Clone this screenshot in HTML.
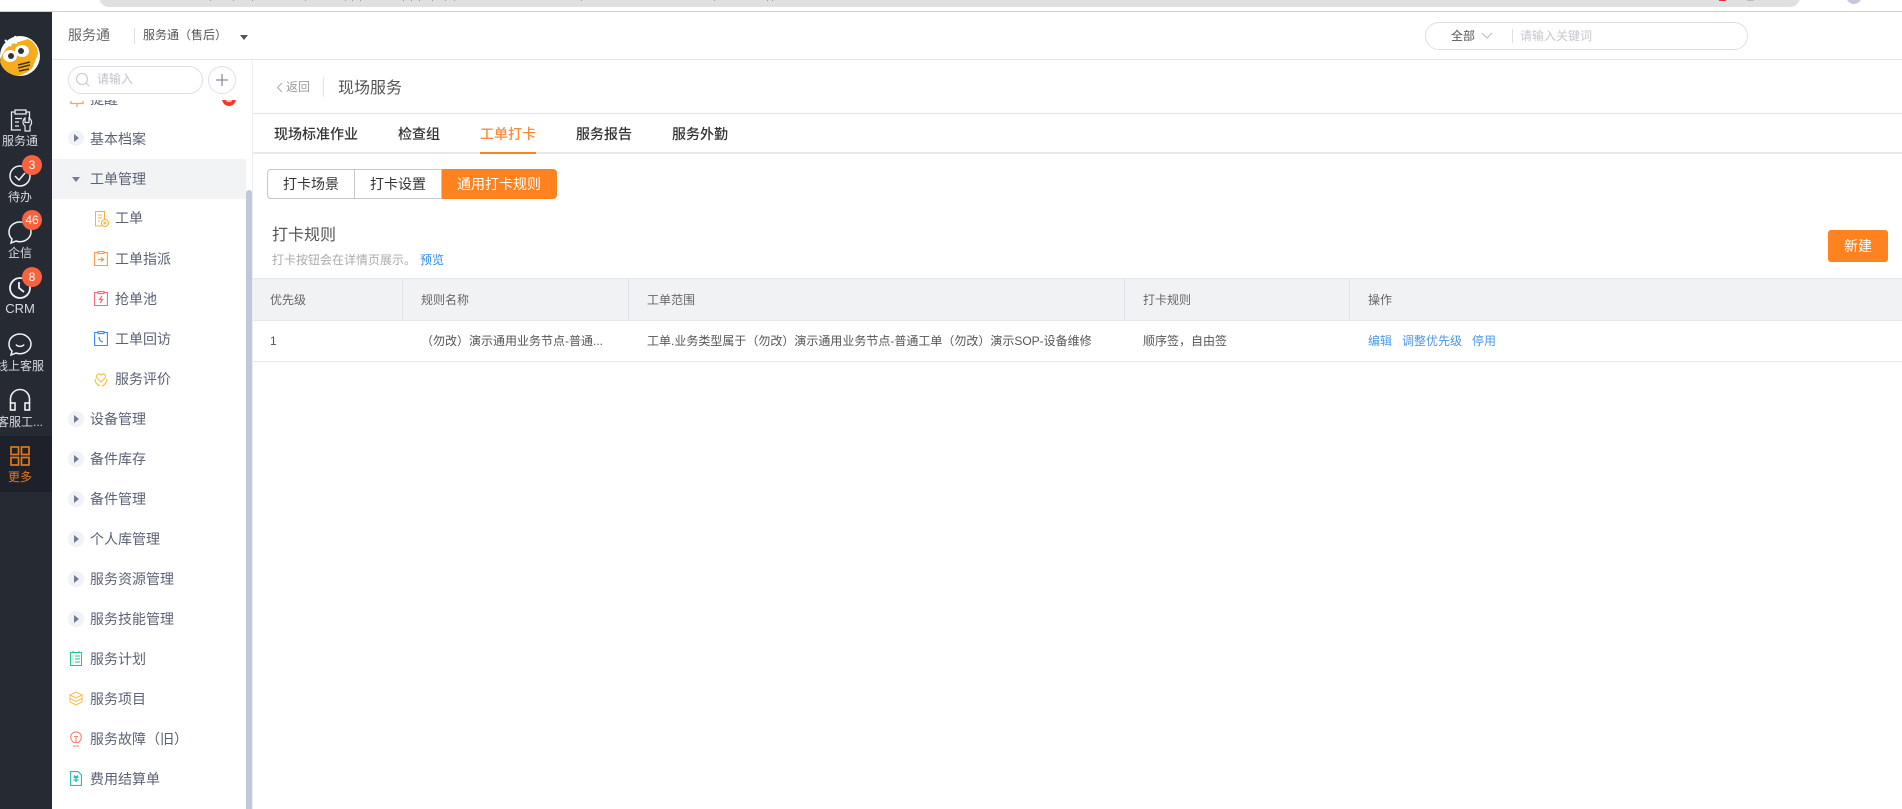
<!DOCTYPE html>
<html lang="zh"><head><meta charset="utf-8"><title>现场服务</title>
<style>
html,body{margin:0;padding:0;width:1902px;height:809px;overflow:hidden;background:#fff}
body{position:relative;font-family:"Liberation Sans","Noto Sans CJK SC",sans-serif;color:#4d5366;filter:blur(.35px)}
.a,.t{position:absolute}
.t{white-space:nowrap;line-height:20px;height:20px}
svg{position:absolute;overflow:visible}
.rail{position:absolute;left:0;top:12px;width:52px;height:797px;background:#252a33}
.rl{position:absolute;left:-16px;width:72px;text-align:center;color:#d8dade;font-size:12px;line-height:16px;white-space:nowrap}
.bd{position:absolute;left:22px;width:20px;height:20px;border-radius:50%;background:#f9623e;color:#fff;font-size:12px;line-height:20px;text-align:center}
.m{font-size:14px;color:#5b6275}
.c{position:absolute;left:68px;width:16px;height:16px;border-radius:50%;background:#f0f2f8}
.c:after{content:"";position:absolute;left:6px;top:3.5px;border-left:5px solid #747c8e;border-top:4.5px solid transparent;border-bottom:4.5px solid transparent}
.tab{font-size:14px;color:#333;top:124px;font-weight:500}
.th{font-size:12px;color:#666;top:290px}
.td{font-size:12px;color:#555;top:331px}
.lk{font-size:12px;color:#4a98e8;top:331px}
.sep{position:absolute;top:279px;width:1px;height:41px;background:#e2e4e9}
.k{position:absolute;top:0;width:1px;height:1px;background:#999}
</style></head><body>

<!-- browser strip -->
<div class="a" style="left:99px;top:-10px;width:1701px;height:17px;background:#e0e0e0;border-radius:0 0 10px 10px"></div>
<div class="k" style="left:210px"></div><div class="k" style="left:233px"></div><div class="k" style="left:252px"></div><div class="k" style="left:305px"></div><div class="k" style="left:345px"></div><div class="k" style="left:352px"></div><div class="k" style="left:360px"></div><div class="k" style="left:403px"></div><div class="k" style="left:411px"></div><div class="k" style="left:419px"></div><div class="k" style="left:432px"></div><div class="k" style="left:445px"></div><div class="k" style="left:454px"></div><div class="k" style="left:581px"></div><div class="k" style="left:714px"></div><div class="k" style="left:767px"></div><div class="k" style="left:772px"></div>
<div class="a" style="left:1846px;top:-12px;width:16px;height:16px;border-radius:50%;background:#c6c9d8"></div>
<div class="a" style="left:1719px;top:0;width:7px;height:1px;background:#e33"></div>
<div class="a" style="left:1747px;top:0;width:7px;height:1px;background:#bbb"></div>
<div class="a" style="left:0;top:11px;width:1902px;height:1px;background:#cfcfcf"></div>

<!-- header -->
<div class="t" style="left:68px;top:25px;font-size:14px;color:#666">服务通</div>
<div class="a" style="left:134px;top:28px;width:1px;height:16px;background:#dcdfe6"></div>
<div class="t" style="left:143px;top:25px;font-size:12px;color:#555">服务通（售后）</div>
<div class="a" style="left:240px;top:35px;border-top:5px solid #555;border-left:4px solid transparent;border-right:4px solid transparent"></div>
<div class="a" style="left:1425px;top:22px;width:321px;height:26px;border:1px solid #dcdfe8;border-radius:14px"></div>
<div class="t" style="left:1451px;top:26px;font-size:12px;color:#555">全部</div>
<svg style="left:1481px;top:32px" width="12" height="8"><path d="M1 1l5 5 5-5" fill="none" stroke="#bbb" stroke-width="1"/></svg>
<div class="a" style="left:1512px;top:29px;width:1px;height:14px;background:#dcdfe6"></div>
<div class="t" style="left:1520px;top:26px;font-size:12px;color:#c4c7cf">请输入关键词</div>
<div class="a" style="left:52px;top:59px;width:1850px;height:1px;background:#e3e4e8"></div>

<!-- rail -->
<div class="rail"></div>
<svg style="left:0;top:36px" width="40" height="40" viewBox="0 0 40 40">
<circle cx="20" cy="20" r="20" fill="#fff"/>
<path d="M0 26 Q2 14 12 8 L28 3 Q38 8 38 18 L34 28 Q32 36 18 40 Q4 38 0 26Z" fill="#f6ad1d"/>
<path d="M5 4l6 6M15 0l1 8" stroke="#fff" stroke-width="2"/>
<ellipse cx="10" cy="20" rx="7" ry="6" fill="#fff"/><ellipse cx="22" cy="15" rx="7" ry="6" fill="#fff"/>
<circle cx="11" cy="20" r="3" fill="#333"/><circle cx="21" cy="15" r="3" fill="#333"/>
<path d="M18 29l12-3M18 32l12-3M19 35l10-2" stroke="#4a3410" stroke-width="1.6"/>
</svg>
<svg style="left:9px;top:109px" width="24" height="24" viewBox="0 0 24 24" fill="none" stroke="#e8e9ec" stroke-width="1.3">
<path d="M6 3H2.500V21H12M17 3h3.500v6"/><rect x="6" y="1" width="11" height="4"/><path d="M6 9.500h7M6 13h4M6 17h4"/>
<path d="M16 9v4.500h4V9a5 5 0 0 1 1 8v5h-5v-5a5 5 0 0 1 0-8z" stroke-width="1.2"/></svg>
<div class="rl" style="top:133px">服务通</div>
<svg style="left:9px;top:165px" width="22" height="22" viewBox="0 0 22 22" fill="none" stroke="#f0f1f3" stroke-width="1.500"><circle cx="11" cy="11" r="10"/><path d="M6 11l4 4 6-7"/></svg>
<div class="bd" style="top:155px">3</div>
<div class="rl" style="top:189px">待办</div>
<svg style="left:8px;top:221px" width="24" height="23" viewBox="0 0 24 23" fill="none" stroke="#f0f1f3" stroke-width="1.500"><path d="M12 1C6 1 1 5 1 11c0 3 1.200 5.500 3 7l-1 4 5-2c1.300.5 2.600.7 4 .7 6 0 11-4.500 11-9.700S18 1 12 1z"/></svg>
<div class="bd" style="top:210px">46</div>
<div class="rl" style="top:245px">企信</div>
<svg style="left:9px;top:277px" width="22" height="22" viewBox="0 0 22 22" fill="none" stroke="#f0f1f3" stroke-width="1.800"><circle cx="11" cy="11" r="10"/><path d="M10 5v6l5 4"/></svg>
<div class="bd" style="top:267px">8</div>
<div class="rl" style="top:301px;font-size:13px">CRM</div>
<svg style="left:8px;top:333px" width="24" height="23" viewBox="0 0 24 23" fill="none" stroke="#f0f1f3" stroke-width="1.500"><path d="M12 1C6 1 1 5 1 11c0 3 1.200 5.500 3 7l-1 4 5-2c1.300.5 2.600.7 4 .7 6 0 11-4.500 11-9.700S18 1 12 1z"/><path d="M8 11.500c1.500 2.500 6.500 2.500 8 0"/></svg>
<div class="rl" style="top:358px">线上客服</div>
<svg style="left:9px;top:389px" width="22" height="22" viewBox="0 0 22 22" fill="none" stroke="#f0f1f3" stroke-width="1.600"><path d="M1.500 14V10a9.500 9.500 0 0 1 19 0v4"/><rect x="1.500" y="14" width="4.500" height="7" fill="#252a33"/><rect x="16" y="14" width="4.500" height="7" fill="#252a33"/></svg>
<div class="rl" style="top:414px">客服工...</div>
<div class="a" style="left:0;top:436px;width:52px;height:56px;background:#1e2129"></div>
<svg style="left:10px;top:446px" width="20" height="20" viewBox="0 0 20 20" fill="none" stroke="#e07a1e" stroke-width="1.700"><rect x="1" y="1" width="7.500" height="7.500"/><rect x="11.500" y="1" width="7.500" height="7.500"/><rect x="1" y="11.500" width="7.500" height="7.500"/><rect x="11.500" y="11.500" width="7.500" height="7.500"/></svg>
<div class="rl" style="top:469px;color:#e07a1e">更多</div>

<!-- left menu -->
<div class="t" style="left:90px;top:89px;font-size:14px;color:#5b6275;clip-path:inset(11px 0 0 0)">提醒</div>
<svg style="left:70px;top:100px" width="14" height="8" viewBox="0 0 14 8" fill="none" stroke="#f7a35c" stroke-width="1.300"><path d="M1 1v2.500h12V1M7 3.500V7"/></svg>
<div class="a" style="left:222px;top:92px;width:14px;height:14px;border-radius:50%;background:#f5382a;clip-path:inset(8px 0 0 0)"></div>
<div class="a" style="left:226px;top:100px;width:6px;height:2px;border-radius:0 0 3px 3px;background:#fbb"></div>
<div class="a" style="left:52px;top:60px;width:201px;height:35px;background:#fff"></div>
<div class="a" style="left:68px;top:66px;width:133px;height:26px;border:1px solid #dcdfe8;border-radius:14px;background:#fff"></div>
<svg style="left:76px;top:73px" width="14" height="14" fill="none" stroke="#c2c6d0" stroke-width="1"><circle cx="6" cy="6" r="5.500"/><path d="M10 10l3 3"/></svg>
<div class="t" style="left:97px;top:69px;font-size:12px;color:#c0c3cc">请输入</div>
<div class="a" style="left:208px;top:66px;width:26px;height:26px;border:1px solid #dcdfe8;border-radius:50%;background:#fff"></div>
<svg style="left:215px;top:73px" width="14" height="14" stroke="#888fa0" stroke-width="1.300"><path d="M7 1v12M1 7h12"/></svg>

<div class="c" style="top:130px"></div><div class="t m" style="left:90px;top:129px">基本档案</div>
<div class="a" style="left:52px;top:159px;width:194px;height:40px;background:#f2f3f5"></div>
<div class="a" style="left:68px;top:171px;width:16px;height:16px;border-radius:50%;background:#f0f2f8"></div>
<div class="a" style="left:72px;top:177px;border-top:5px solid #747c8e;border-left:4.500px solid transparent;border-right:4.500px solid transparent"></div>
<div class="t m" style="left:90px;top:169px">工单管理</div>

<svg style="left:95px;top:211px" width="14" height="16" viewBox="0 0 14 16" fill="none" stroke="#f9b233" stroke-width="1"><path d="M7 15H.5V.5h9V8"/><path d="M3 4h4M3 7h4M3 10h2"/><circle cx="10" cy="12" r="3.500"/><circle cx="10" cy="12" r="1"/></svg>
<div class="t m" style="left:115px;top:208px">工单</div>
<svg style="left:94px;top:251px" width="14" height="15" viewBox="0 0 14 15" fill="none" stroke="#f79a50" stroke-width="1.100"><path d="M4 1.500H.6v13h12.800v-13H10"/><rect x="4" y=".6" width="6" height="2"/><path d="M4 8.500h5M7 6.500l2.500 2-2.500 2" stroke-width="1.300"/></svg>
<div class="t m" style="left:115px;top:249px">工单指派</div>
<svg style="left:94px;top:291px" width="14" height="15" viewBox="0 0 14 15" fill="none" stroke="#f4697c" stroke-width="1.100"><path d="M4 1.500H.6v13h12.800v-13H10"/><rect x="4" y=".6" width="6" height="2"/><path d="M8 5L5.500 8.500h3L6 12" stroke-width="1.200"/></svg>
<div class="t m" style="left:115px;top:289px">抢单池</div>
<svg style="left:94px;top:331px" width="14" height="15" viewBox="0 0 14 15" fill="none" stroke="#3d87ef" stroke-width="1.100"><path d="M4 1.500H.6v13h12.800v-13H10"/><rect x="4" y=".6" width="6" height="2"/><path d="M5 6c0 3 2 5 4 5" stroke-width="1.300"/></svg>
<div class="t m" style="left:115px;top:329px">工单回访</div>
<svg style="left:94px;top:372px" width="14" height="15" viewBox="0 0 14 15" fill="none" stroke="#fbbd4a" stroke-width="1.200"><path d="M7 10L3 6a2.400 2.400 0 0 1 4-3 2.400 2.400 0 0 1 4 3z"/><path d="M1 7c0 3 2 6 5 7M13 7c0 3-2 6-5 7"/></svg>
<div class="t m" style="left:115px;top:369px">服务评价</div>

<div class="c" style="top:411px"></div><div class="t m" style="left:90px;top:409px">设备管理</div>
<div class="c" style="top:451px"></div><div class="t m" style="left:90px;top:449px">备件库存</div>
<div class="c" style="top:491px"></div><div class="t m" style="left:90px;top:489px">备件管理</div>
<div class="c" style="top:531px"></div><div class="t m" style="left:90px;top:529px">个人库管理</div>
<div class="c" style="top:571px"></div><div class="t m" style="left:90px;top:569px">服务资源管理</div>
<div class="c" style="top:611px"></div><div class="t m" style="left:90px;top:609px">服务技能管理</div>

<svg style="left:70px;top:651px" width="12" height="15" viewBox="0 0 12 15" fill="none" stroke="#22c68c" stroke-width="1"><rect x=".5" y="1.500" width="11" height="13"/><path d="M3 0v2M9 0v2M5 5h5M5 8h5M5 11h5"/><path d="M2.500 5h1M2.500 8h1M2.500 11h1"/></svg>
<div class="t m" style="left:90px;top:649px">服务计划</div>
<svg style="left:69px;top:691px" width="14" height="15" viewBox="0 0 14 15" fill="none" stroke="#fbbd4a" stroke-width="1"><path d="M7 1l6 3-6 3-6-3zM1 7.500l6 3 6-3M1 11l6 3 6-3M1 4v7M13 4v7"/></svg>
<div class="t m" style="left:90px;top:689px">服务项目</div>
<svg style="left:70px;top:731px" width="12" height="16" viewBox="0 0 12 16" fill="none" stroke="#f8836c" stroke-width="1.100"><path d="M3.500 11.500C2 10 .7 8.500.7 6.200a5.300 5.300 0 0 1 10.600 0c0 2.300-1.300 3.800-2.800 5.300z"/><path d="M3 15h6M6 6v5M4 5.500h4"/></svg>
<div class="t m" style="left:90px;top:729px">服务故障（旧）</div>
<svg style="left:70px;top:771px" width="12" height="15" viewBox="0 0 12 15" fill="none" stroke="#21bfb5" stroke-width="1.100"><path d="M.6.600H8l3.400 3.400v10.400H.6z"/><path d="M6 5v6M3.500 6.500h5M3.500 9h5M4 4.500L6 6.500 8 4.500" stroke-width="1.300"/></svg>
<div class="t m" style="left:90px;top:769px">费用结算单</div>

<div class="a" style="left:246px;top:190px;width:6px;height:619px;background:#c0c9d5;border-radius:3px 3px 0 0"></div>
<div class="a" style="left:252px;top:61px;width:1px;height:748px;background:#eceef1"></div>

<!-- page head -->
<svg style="left:276px;top:82px" width="7" height="11" fill="none" stroke="#a9abb3" stroke-width="1"><path d="M6 1L1.500 5.500 6 10"/></svg>
<div class="t" style="left:286px;top:77px;font-size:12px;color:#999">返回</div>
<div class="a" style="left:323px;top:77px;width:1px;height:20px;background:#e3e4e8"></div>
<div class="t" style="left:338px;top:79px;font-size:16px;color:#555">现场服务</div>
<div class="a" style="left:253px;top:113px;width:1649px;height:1px;background:#e3e4e8"></div>

<!-- tabs -->
<div class="t tab" style="left:274px">现场标准作业</div>
<div class="t tab" style="left:398px">检查组</div>
<div class="t tab" style="left:480px;color:#ff8a3c">工单打卡</div>
<div class="t tab" style="left:576px">服务报告</div>
<div class="t tab" style="left:672px">服务外勤</div>
<div class="a" style="left:253px;top:152px;width:1649px;height:2px;background:#e6e8ec"></div>
<div class="a" style="left:480px;top:152px;width:56px;height:2px;background:#ff8220"></div>

<!-- segmented -->
<div class="a" style="left:267px;top:169px;width:86px;height:28px;border:1px solid #c2c6cf;border-radius:4px 0 0 4px"></div>
<div class="a" style="left:354px;top:169px;width:87px;height:28px;border:1px solid #c2c6cf;border-left:0"></div>
<div class="a" style="left:442px;top:169px;width:115px;height:30px;background:#ff8220;border-radius:0 4px 4px 0"></div>
<div class="t" style="left:283px;top:174px;font-size:14px;color:#333">打卡场景</div>
<div class="t" style="left:370px;top:174px;font-size:14px;color:#333">打卡设置</div>
<div class="t" style="left:457px;top:174px;font-size:14px;color:#fff">通用打卡规则</div>

<div class="t" style="left:272px;top:226px;font-size:16px;color:#555">打卡规则</div>
<div class="t" style="left:272px;top:250px;font-size:12px;color:#aaa">打卡按钮会在详情页展示。</div>
<div class="t" style="left:420px;top:250px;font-size:12px;color:#2d8cf0">预览</div>
<div class="a" style="left:1828px;top:230px;width:60px;height:32px;background:#ff8220;border-radius:3px;color:#fff;font-size:14px;line-height:32px;text-align:center">新建</div>

<!-- table -->
<div class="a" style="left:253px;top:278px;width:1649px;height:43px;background:#f1f2f4;border-top:1px solid #e6e7ea;border-bottom:1px solid #e6e7ea;box-sizing:border-box"></div>
<div class="sep" style="left:402px"></div><div class="sep" style="left:628px"></div><div class="sep" style="left:1124px"></div><div class="sep" style="left:1349px"></div>
<div class="t th" style="left:270px">优先级</div>
<div class="t th" style="left:421px">规则名称</div>
<div class="t th" style="left:647px">工单范围</div>
<div class="t th" style="left:1143px">打卡规则</div>
<div class="t th" style="left:1368px">操作</div>
<div class="t td" style="left:270px">1</div>
<div class="t td" style="left:421px">（勿改）演示通用业务节点-普通...</div>
<div class="t td" style="left:647px">工单.业务类型属于（勿改）演示通用业务节点-普通工单（勿改）演示SOP-设备维修</div>
<div class="t td" style="left:1143px">顺序签，自由签</div>
<div class="t lk" style="left:1368px">编辑</div>
<div class="t lk" style="left:1402px">调整优先级</div>
<div class="t lk" style="left:1472px">停用</div>
<div class="a" style="left:253px;top:361px;width:1649px;height:1px;background:#e8e9ec"></div>
</body></html>
